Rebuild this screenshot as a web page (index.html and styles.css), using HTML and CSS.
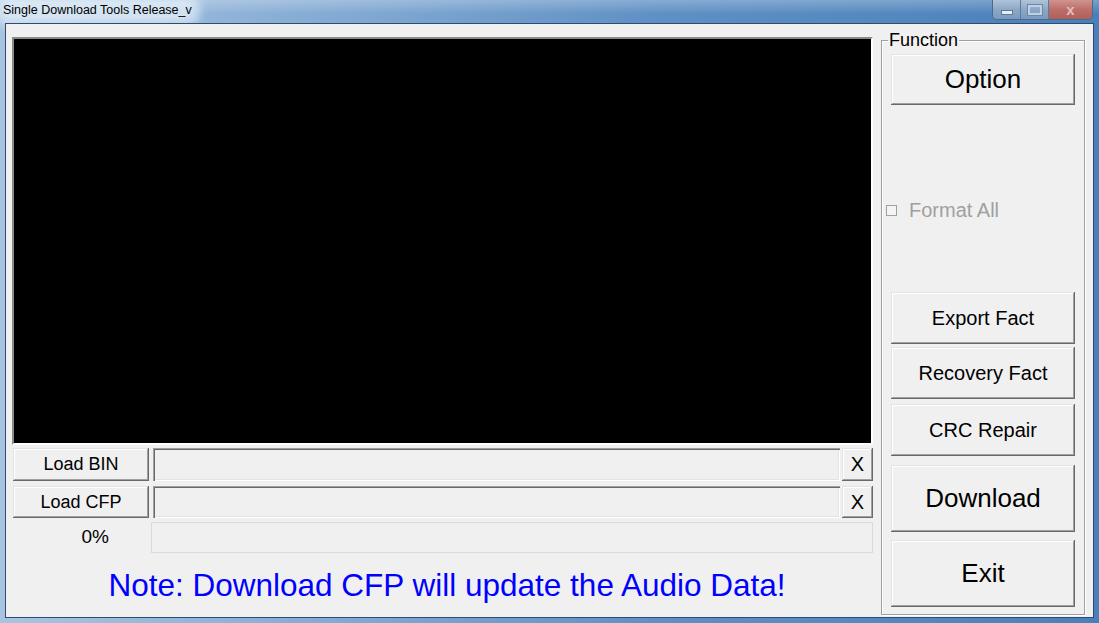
FILE: index.html
```html
<!DOCTYPE html>
<html lang="en">

<head>
    <meta charset="UTF-8">
    <meta name="viewport" content="width=device-width, initial-scale=1.0">
    <title>Single Download Tools Release_v</title>
    <link rel="stylesheet" href="styles.css">
</head>

<body>
    <div class="window">
        <div class="titlebar">
            <span class="title">Single Download Tools Release_v</span>
            <div class="controls">
                <span class="ctl min"><i></i></span>
                <span class="ctl max"><i></i></span>
                <span class="ctl close">x</span>
            </div>
        </div>

        <div class="client">
            <div class="main">
                <div class="screen"></div>

                <div class="row row-bin">
                    <button class="btn load">Load BIN</button>
                    <div class="field"></div>
                    <button class="btn clear">X</button>
                </div>

                <div class="row row-cfp">
                    <button class="btn load">Load CFP</button>
                    <div class="field"></div>
                    <button class="btn clear">X</button>
                </div>

                <div class="row row-progress">
                    <span class="percent">0%</span>
                    <div class="progress"></div>
                </div>

                <p class="note">Note: Download CFP will update the Audio Data!</p>
            </div>

            <fieldset class="func">
                <legend>Function</legend>
                <button class="btn big option">Option</button>

                <label class="check">
                    <span class="box"></span>
                    Format All
                </label>

                <button class="btn mid export">Export Fact</button>
                <button class="btn mid recovery">Recovery Fact</button>
                <button class="btn mid crc">CRC Repair</button>
                <button class="btn tall download">Download</button>
                <button class="btn tall exit">Exit</button>
            </fieldset>
        </div>
    </div>
</body>

</html>
```

FILE: styles.css
```css
html,
body {
    margin: 0;
    padding: 0;
}

body {
    font-family: "Liberation Sans", Arial, sans-serif;
    color: #000;
}

.window {
    width: 1099px;
    height: 623px;
    display: flex;
    flex-direction: column;
    background: linear-gradient(to right, #a9c4e0 0%, #8aafd6 25%, #5f90c4 60%, #4a80b9 100%);
    overflow: hidden;
}

/* title bar */
.titlebar {
    height: 23px;
    flex-shrink: 0;
    display: flex;
    align-items: flex-start;
    background: linear-gradient(to bottom, rgba(255, 255, 255, 0.25), rgba(255, 255, 255, 0) 60%);
}

.title {
    margin: 2px 0 0 3px;
    font-size: 12.5px;
    line-height: 16px;
    color: #000;
    background: rgba(230, 240, 250, 0.75);
    box-shadow: 0 0 10px 8px rgba(230, 240, 250, 0.7);
    border-radius: 6px;
}

.controls {
    margin-left: auto;
    margin-right: 6px;
    display: flex;
    height: 19px;
    border: 1px solid #4b6a8e;
    border-top: none;
    border-radius: 0 0 5px 5px;
    overflow: hidden;
}

.ctl {
    display: flex;
    align-items: center;
    justify-content: center;
    width: 27px;
    border-right: 1px solid #5b7b9f;
    background: linear-gradient(to bottom, #b0c4da, #8ca8c8 50%, #7b9abd);
}

.ctl.min i {
    width: 10px;
    height: 3px;
    margin-top: 5px;
    background: #e8eef5;
    border: 1px solid #5d7898;
}

.ctl.max i {
    width: 10px;
    height: 6px;
    border: 2px solid #c0d0e2;
    outline: 1px solid #6c88a9;
}

.ctl.close {
    width: 43px;
    border-right: none;
    background: linear-gradient(to bottom, #cf9490, #bd6e69 50%, #b0605a);
    color: #e0bfbc;
    font-size: 15px;
    font-weight: bold;
    line-height: 18px;
}

/* client area */
.client {
    flex: 1;
    min-height: 0;
    margin: 0 5px 5px 5px;
    border: 1px solid #2d4c72;
    background: #f0f0f0;
    display: flex;
    align-items: flex-start;
    padding: 7px 8px 0 6px;
}

.main {
    width: 861px;
    display: flex;
    flex-direction: column;
}

.screen {
    margin-top: 6px;
    height: 404px;
    background: #000;
    border-top: 2px solid #8a8a8a;
    border-left: 2px solid #8a8a8a;
    border-bottom: 2px solid #fff;
    border-right: 2px solid #fff;
}

.row {
    display: flex;
    align-items: stretch;
}

.row-bin {
    margin-top: 3px;
    height: 33px;
}

.row-cfp {
    margin-top: 5px;
    height: 32px;
}

.row-progress {
    margin-top: 4px;
    height: 31px;
}

/* classic 3D button */
.btn {
    font-family: "Liberation Sans", Arial, sans-serif;
    background: #f0f0f0;
    color: #000;
    border: none;
    padding: 0;
    flex-shrink: 0;
    box-shadow: inset -1px -1px #696969, inset 1px 1px #e3e3e3, inset -2px -2px #a0a0a0, inset 2px 2px #fff;
}

.load {
    width: 136px;
    margin-left: 1px;
    font-size: 18px;
}

.field {
    flex: 1;
    margin-left: 4px;
    background: #f0f0f0;
    box-shadow: inset 1px 1px #a0a0a0, inset 2px 2px #696969, inset -1px -1px #fff, inset -2px -2px #e3e3e3;
}

.clear {
    width: 31px;
    margin-left: 2px;
    font-size: 20px;
}

.percent {
    width: 139px;
    text-align: right;
    padding-right: 42px;
    box-sizing: border-box;
    font-size: 19px;
    line-height: 30px;
}

.progress {
    flex: 1;
    border: 1px solid #dadada;
    background: #f0f0f0;
}

.note {
    margin: 14px 0 0 0;
    text-align: center;
    font-size: 31.5px;
    line-height: 36px;
    color: #0000ff;
    padding-left: 9px;
}

/* function group */
.func {
    width: 204px;
    height: 584px;
    box-sizing: border-box;
    margin: 0 0 0 8px;
    padding: 0 9px 0 9px;
    border: 1px solid #a0a0a0;
    box-shadow: 1px 1px #fff, inset 1px 1px #fff;
    display: flex;
    flex-direction: column;
}

.func legend {
    font-size: 18px;
    line-height: 18px;
    padding: 0 1px;
    margin-left: -3px;
}

.big {
    height: 51px;
    margin-top: 5px;
    font-size: 26px;
}

.check {
    display: flex;
    flex-shrink: 0;
    align-items: center;
    margin: 95px 0 0 -5px;
    height: 20px;
    font-size: 20px;
    color: #a0a0a0;
}

.box {
    width: 9px;
    height: 9px;
    margin-right: 12px;
    border: 1px solid #a0a0a0;
    background: #f4f4f4;
}

.mid {
    height: 52px;
    font-size: 20px;
}

.export {
    margin-top: 72px;
}

.recovery {
    margin-top: 3px;
}

.crc {
    margin-top: 5px;
}

.tall {
    height: 67px;
    font-size: 26px;
}

.download {
    margin-top: 9px;
}

.exit {
    margin-top: 8px;
}
```
